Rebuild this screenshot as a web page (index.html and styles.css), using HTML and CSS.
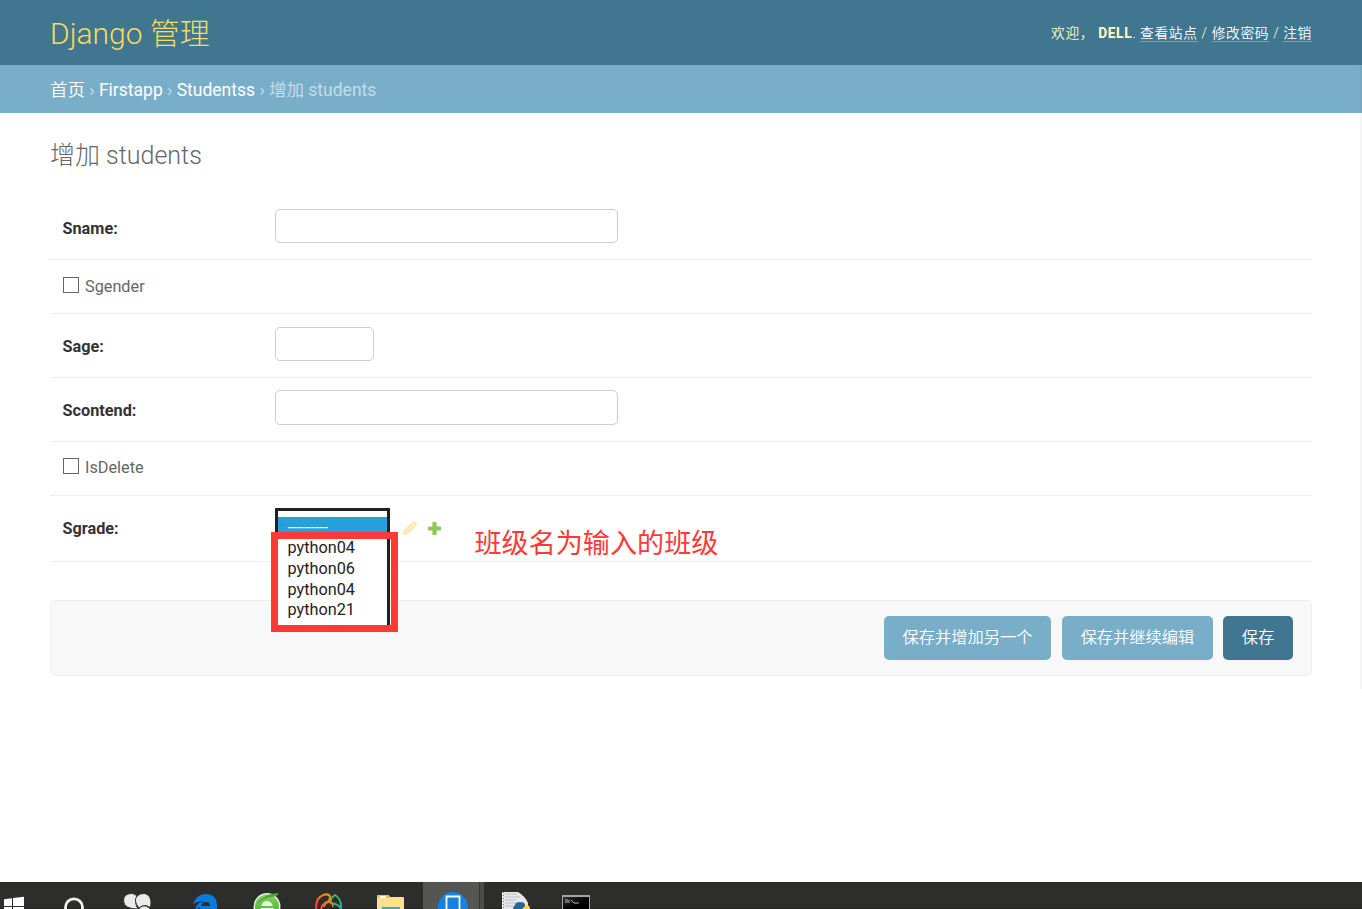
FILE: index.html
```html
<!DOCTYPE html>
<html lang="zh-CN">
<head>
<meta charset="utf-8">
<title>增加 students | Django 站点管理员</title>
<link rel="stylesheet" href="styles.css">
</head>
<body>
<header class="header">
  <div class="branding">Django 管理</div>
  <div class="user-tools"><span class="welcome">欢迎，</span><strong>DELL</strong>. <a>查看站点</a> / <a>修改密码</a> / <a>注销</a></div>
</header>
<nav class="breadcrumbs"><a class="home">首页</a> › <a>Firstapp</a> › <a>Studentss</a> › 增加 students</nav>
<main class="content">
  <h1>增加 students</h1>
  <form class="form">
    <div class="row row-first"><label for="sname">Sname:</label><input id="sname" class="field" type="text"></div>
    <div class="row row-check"><input id="sgender" class="check" type="checkbox"><label for="sgender">Sgender</label></div>
    <div class="row"><label for="sage">Sage:</label><input id="sage" class="field field-small" type="text"></div>
    <div class="row"><label for="scontend">Scontend:</label><input id="scontend" class="field field-tall" type="text"></div>
    <div class="row row-check row-delete"><input id="isdelete" class="check" type="checkbox"><label for="isdelete">IsDelete</label></div>
    <div class="row row-select">
      <label>Sgrade:</label>
      <div class="select">
        <ul class="options">
          <li class="selected">---------</li>
          <li>python04</li><li>python06</li><li>python04</li><li>python21</li>
        </ul>
        <div class="highlight"></div>
      </div>
      <svg class="pencil" width="14" height="14" viewBox="0 0 14 14"><path d="M0 14l.6-4.600 7.200-7.200 4 4L4.600 13.400zM8.500 1.700l1.200-1.200q1-.9 2 0l1.800 1.800q.9 1 0 2l-1.200 1.200z" fill="#fbe9b0"/><path d="M1.500 10.300l2.200 2.200M3.800 9.500l5-5" stroke="#fff6da" stroke-width=".8"/></svg>
      <svg class="plus" width="13" height="13" viewBox="0 0 13 13"><path d="M5 0h3q.6 0 .6.600V4.600h3.800q.6 0 .6.600v2.600q0 .6-.6.600H8.600v4q0 .6-.6.600H5q-.6 0-.6-.6v-4H.6q-.6 0-.6-.6V5.200q0-.6.600-.6h3.800v-4Q4.400 0 5 0z" fill="#8bcb55"/></svg>
      <span class="note">班级名为输入的班级</span>
    </div>
    <div class="submit-row">
      <button type="button" class="button">保存并增加另一个</button>
      <button type="button" class="button button-edit">保存并继续编辑</button>
      <button type="button" class="button button-save">保存</button>
    </div>
  </form>
</main>
<div class="edge-shadow"></div>
<footer class="taskbar">
  <svg width="620" height="27" viewBox="0 0 620 27">
    <defs>
      <linearGradient id="green" x2="0" y2="1"><stop stop-color="#82d365"/><stop offset="1" stop-color="#43a727"/></linearGradient>
      <linearGradient id="console" x2="1" y2="1"><stop stop-color="#333"/><stop offset=".6" stop-color="#000"/></linearGradient>
      <linearGradient id="warm" x1="0" y1="1" x2="1" y2="0"><stop stop-color="#ed3041"/><stop offset="1" stop-color="#ff9c00"/></linearGradient>
      <linearGradient id="cool" x2="1" y2="1"><stop stop-color="#54b949"/><stop offset="1" stop-color="#22a9a4"/></linearGradient>
    </defs>
    <path d="M423 0h56v27h-56z" fill="#555554"/><path d="M480 0h4v27h-4z" fill="#4c4c4b"/><path d="M479 0h1v27h-1z" fill="#363635"/>
    <path d="M4 17.300l8-1.100v7.800H4zM13 16l11-1.300V24H13zM4 25h8v2H4zM13 25h11v2H13z" fill="#fff"/>
    <circle cx="74" cy="25.300" r="8.500" fill="none" stroke="#f2f2f2" stroke-width="2.800"/>
    <g fill="#ebebeb" stroke="#2d2d2c" stroke-width="1"><path d="M138 27q-14 0-14.500-8 0-7.500 8-7.500 4 0 5.500 3-3 6 1 12.500z"/><path d="M139 26q-6-7-2-12 3-3 8-2.500 6 2 6 9 0 3-1 5-5-4-11 .5z"/><path d="M138 29q2-6 8-5 4 1 5 5z"/></g>
    <path d="M193 22.500Q196 12 205.500 12Q217 12 217 24v3h-17q0-1-.4-1.400-2 .4-2.400 1.400h-2q1-6 9-8-7-.3-11.200 3.500z" fill="#087bdc"/><path d="M201 24q1-4 5-4t4 4z" fill="#2d2d2c"/>
    <circle cx="267" cy="24.500" r="12.700" fill="url(#green)" stroke="#e8f0e6" stroke-width="1.500"/><path d="M261 24q2-5 6-5t6 5zM261 26h13v1h-13z" fill="#e8fbe1"/><path d="M256 23q8-12 23-12-1 3-7 4-9 1-16 8z" fill="#51a934"/>
    <path d="M316 27q0-9 4-12 5-4 9-2 2 2 0 6-7 3-8 8" fill="none" stroke="url(#warm)" stroke-width="2.200"/><path d="M331 21q-1-5 4-8 7 4 6 14-2-5-10-6z" fill="none" stroke="url(#cool)" stroke-width="2"/><path d="M324 25q1-4 5-5 4 1 4 5" fill="none" stroke="#f37c1c" stroke-width="1.600"/>
    <path d="M377 14q0-1 1-1h10q1 0 2 2h13q1 0 1 1v11h-27z" fill="#ffe08c"/><path d="M377 14q0-1 1-1h10q1 0 2 3h-12z" fill="#f5c32e"/><path d="M380 14h6v2h-6z" fill="#fff"/><path d="M382 25h18v2h-18z" fill="#2fa8de"/>
    <circle cx="453" cy="25" r="15" fill="#1782d9"/><path d="M446.500 27V14.500h13V27" fill="#1782d9" stroke="#fff" stroke-width="1.800"/>
    <path d="M502 10h16q7 4 10 11v6h-26z" fill="#e8e8e8"/><path d="M505 12h12M505 15h15M505 18h11M505 21h10M505 24h8" stroke="#b9bec3"/><path d="M503.500 10v17" stroke="#777" stroke-dasharray="1 2"/><path d="M515 23q0-3 5-3t5 3v4h-12q0-3 2-4z" fill="#28659c"/><path d="M526 23q4 0 4 4h-8z" fill="#ffd447"/>
    <path d="M562 13h28v14h-28z" fill="#a2a5a9"/><path d="M563 15h26v12h-26z" fill="url(#console)"/><path d="M565 18h3M565 20h3M569 18v3M571 18l3 3M574 21h5" stroke="#bbb" stroke-width="1"/>
  </svg>
</footer>
</body>
</html>
```
FILE: styles.css
```css
* { box-sizing: border-box; }
body {
  margin: 0;
  height: 909px;
  overflow: hidden;
  display: flex;
  flex-direction: column;
  background: #fff;
  color: #333;
  font-family: Roboto, "Noto Sans CJK SC", sans-serif;
  font-size: 16.25px;
}
.header {
  height: 65px;
  flex: none;
  padding: 0 50px;
  display: flex;
  justify-content: space-between;
  align-items: center;
  background: #417690;
  color: #ffc;
}
.branding { font-size: 30px; font-weight: 300; line-height: 40px; color: #f5dd5d; padding-top: 2px; }
.user-tools { font-size: 13.75px; letter-spacing: .625px; font-weight: 350; line-height: 20px; white-space: nowrap; }
.user-tools strong { font-weight: 700; }
.user-tools a { display: inline-block; line-height: 16px; color: #fff; border-bottom: 1px solid #7d9fb0; }
.welcome { margin-right: 4px; }
.breadcrumbs {
  height: 48px;
  flex: none;
  padding: 2px 50px 0;
  line-height: 47px;
  font-size: 17.5px;
  background: #79aec8;
  color: #c4dce8;
  font-weight: 400;
}
.breadcrumbs a { color: #fff; }
.content { flex: 1; padding: 0 50px; }
.content h1 { margin: 24px 0 20px; height: 38px; line-height: 38px; font-size: 25px; font-weight: 300; color: #666; }
.row { height: 64px; padding-left: 12.5px; display: flex; align-items: center; border-bottom: 1px solid #eee; }
.row label { width: 212.5px; flex: none; font-weight: 700; font-size: 16.25px; line-height: 20px; padding-top: 3px; }
.row-first { height: 65px; }
.row .field { height: 34px; width: 343px; margin: 0 0 4px; border: 1px solid #ccc; border-radius: 5px; background: #fff; }
.row-first .field { margin-bottom: 3px; }
.row .field-small { width: 99px; }
.row .field-tall { height: 35px; margin-bottom: 5px; }
.row-check { height: 54px; }
.row-check label { width: auto; font-weight: 400; color: #666; padding-top: 0; }
.row-delete { padding-bottom: 2px; }
.check { appearance: none; width: 16px; height: 16px; margin: 0 6.5px 3px 0; border: 1px solid #666; background: #fff; }
.row-select { height: 66px; align-items: flex-start; }
.row-select label { margin-top: 20px; }
.select { position: relative; width: 115px; height: 34px; margin-top: 12px; flex: none; }
.options {
  position: absolute;
  z-index: 1;
  top: 0;
  left: 0;
  width: 115px;
  height: 120px;
  margin: 0;
  padding: 6px 0 0;
  list-style: none;
  border: 3px solid #20211e;
  border-bottom: 0;
  background: #fff;
  color: #222;
  line-height: 20.8px;
}
.options li { padding-left: 9.5px; }
.options li:nth-child(4) { line-height: 21.8px; }
.options li:nth-child(5) { line-height: 18px; }
.options .selected { height: 20.8px; padding-top: 1px; color: #fff; background: #269fdb; }
.highlight { position: absolute; z-index: 2; top: 24px; left: -4px; width: 127px; height: 100px; border: 7px solid #ff3838; }
.pencil { margin: 25px 0 0 12.5px; flex: none; }
.plus { margin: 26px 0 0 11.5px; flex: none; }
.note { margin: 26px 0 0 33.5px; font: 27.1px/40px "Noto Sans CJK SC", sans-serif; color: #ff3838; white-space: nowrap; }
.submit-row {
  height: 76px;
  margin-top: 38px;
  padding: 15px 18px;
  display: flex;
  justify-content: flex-end;
  border: 1px solid #eee;
  border-radius: 5px;
  background: #f8f8f8;
}
.button { width: 167px; height: 44px; padding: 0 0 4px; border: 0; border-radius: 5px; background: #79aec8; color: #fff; font: 350 16.25px "Noto Sans CJK SC", sans-serif; white-space: nowrap; }
.button-edit { width: 151px; margin: 0 10px 0 11px; }
.button-save { width: 70px; background: #417690; }
.home { font-family: "Noto Sans CJK SC", sans-serif; font-weight: 350; line-height: 1; }
.edge-shadow { position: absolute; top: 66px; right: 0; width: 3px; height: 623px; background: linear-gradient(90deg, transparent, rgba(0, 0, 0, .06)); }
.taskbar { height: 27px; flex: none; background: #2d2d2c; border-bottom: 1px solid #272323; }
.taskbar svg { display: block; }
```
